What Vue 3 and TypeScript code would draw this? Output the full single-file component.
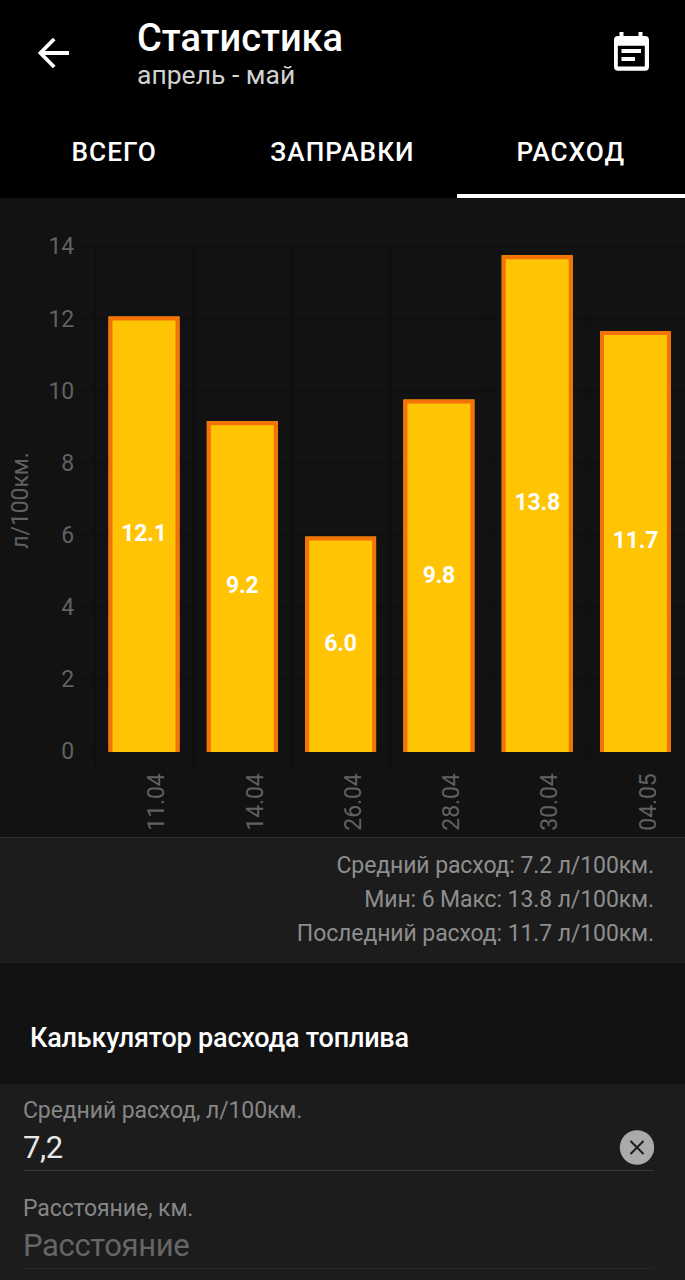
<script setup lang="ts">
import { ref } from 'vue'

interface Bar {
  date: string
  value: number
}

const tabs = ['ВСЕГО', 'ЗАПРАВКИ', 'РАСХОД']
const activeTab = ref(2)

const bars: Bar[] = [
  { date: '11.04', value: 12.1 },
  { date: '14.04', value: 9.2 },
  { date: '26.04', value: 6.0 },
  { date: '28.04', value: 9.8 },
  { date: '30.04', value: 13.8 },
  { date: '04.05', value: 11.7 },
]
const ticks = [14, 12, 10, 8, 6, 4, 2, 0]

const zeroY = 554
const unit = 36.07
const step = 98.3
const plotLeft = 95
const barWidth = 71

const yOf = (v: number): number => zeroY - v * unit
const topOf = (v: number): number => yOf(v) + 1
const xOf = (i: number): number => 108.5 + i * step
const outline = (i: number, v: number): string => {
  const l = xOf(i) + 2
  const r = xOf(i) + barWidth - 2
  const t = topOf(v) + 2
  return `M${l} ${zeroY}V${t}H${r}V${zeroY}`
}

const summary = [
  'Средний расход: 7.2 л/100км.',
  'Мин: 6 Макс: 13.8 л/100км.',
  'Последний расход: 11.7 л/100км.',
]

const average = ref('7,2')
const distance = ref('')
</script>

<template>
  <main class="screen">
    <header class="top">
      <div class="bar">
        <button class="icon-btn back" aria-label="Назад">
          <svg width="32" height="32" viewBox="0 0 32 32">
            <path d="M31 16H3M16.2 2L2.4 16L16.2 30" fill="none" stroke="#fff" stroke-width="3.8" />
          </svg>
        </button>
        <div class="heading">
          <h1>Статистика</h1>
          <p>апрель - май</p>
        </div>
        <button class="icon-btn calendar" aria-label="Период">
          <svg width="36" height="40" viewBox="0 0 36 40">
            <path
              fill="#fff"
              fill-rule="evenodd"
              d="M5.500 0h4v4h15V0h4v4h2.500a4 4 0 0 1 4 4v26.700a4 4 0 0 1-4 4H4a4 4 0 0 1-4-4V8a4 4 0 0 1 4-4H5.500zM3.800 13.700v20.800h27V13.700zM7.500 17h19.500v4H7.500zM7.500 25h13.500v4H7.500z"
            />
          </svg>
        </button>
      </div>
      <nav class="tabs">
        <button
          v-for="(tab, i) in tabs"
          :key="tab"
          class="tab"
          :class="{ active: i === activeTab }"
          @click="activeTab = i"
        >
          {{ tab }}
        </button>
      </nav>
    </header>

    <svg class="chart" width="685" height="639" viewBox="0 0 685 639">
      <g stroke="#0f0f0f" stroke-width="2">
        <line v-for="t in ticks" :key="t" x1="80" x2="685" :y1="yOf(t)" :y2="yOf(t)" />
        <line
          v-for="n in 6"
          :key="n"
          :x1="plotLeft + (n - 1) * step"
          :x2="plotLeft + (n - 1) * step"
          y1="49"
          y2="570"
        />
      </g>
      <text
        v-for="t in ticks"
        :key="'t' + t"
        class="axis"
        x="74.200"
        :y="yOf(t) + 7.4"
        text-anchor="end"
      >{{ t }}</text>
      <text class="axis unit" transform="translate(28 302.500) rotate(-90)" text-anchor="middle">л/100км.</text>
      <g v-for="(b, i) in bars" :key="b.date">
        <rect
          :x="xOf(i)"
          :y="topOf(b.value)"
          :width="barWidth"
          :height="zeroY - topOf(b.value)"
          fill="#ffc403"
        />
        <path :d="outline(i, b.value)" fill="none" stroke="#f47209" stroke-width="4" />
        <text
          class="value"
          :x="xOf(i) + barWidth / 2"
          :y="(yOf(b.value) + zeroY) / 2 + 7.300"
          text-anchor="middle"
        >{{ b.value.toFixed(1) }}</text>
        <text
          class="axis date"
          :transform="`translate(${xOf(i) + 55.7} 604) rotate(-90)`"
          text-anchor="middle"
        >{{ b.date }}</text>
      </g>
    </svg>

    <section class="summary">
      <p v-for="line in summary" :key="line">{{ line }}</p>
    </section>

    <h2>Калькулятор расхода топлива</h2>

    <section class="form">
      <label class="field">
        <span class="caption">Средний расход, л/100км.</span>
        <span class="row">
          <input v-model="average" type="text" />
          <button class="clear" aria-label="Очистить" @click="average = ''">
            <svg width="35" height="35" viewBox="0 0 35 35">
              <circle cx="18" cy="17.500" r="17.200" fill="#aaa" />
              <path d="M11.500 11L24.500 24M24.500 11L11.500 24" stroke="#1c1c1c" stroke-width="2" />
            </svg>
          </button>
        </span>
      </label>
      <label class="field dim">
        <span class="caption">Расстояние, км.</span>
        <span class="row">
          <input v-model="distance" type="text" placeholder="Расстояние" />
        </span>
      </label>
    </section>
  </main>
</template>

<style>
html,
body {
  background: #121212;
  overflow: hidden;
}
</style>

<style scoped>
.screen {
  width: 685px;
  height: 1280px;
  overflow: hidden;
  background: #121212;
  color: #fff;
  font-family: Roboto, 'Noto Sans', sans-serif;
}
h1,
h2,
p {
  margin: 0;
}
button {
  border: 0;
  padding: 0;
  background: none;
  color: inherit;
  font-family: inherit;
}
svg {
  display: block;
}
.top {
  height: 198px;
  background: #000;
}
.bar {
  display: flex;
  height: 106px;
  box-sizing: border-box;
  padding: 17px 35px 0 38px;
}
.back {
  align-self: flex-start;
  margin-top: 20px;
}
.heading {
  flex: 1;
  margin-left: 67px;
}
h1 {
  font-size: 38px;
  font-weight: 500;
  line-height: 42px;
}
.heading p {
  font-size: 26.5px;
  line-height: 32px;
  color: #d2d2d2;
}
.calendar {
  align-self: flex-start;
  margin-top: 15px;
}
.tabs {
  display: grid;
  grid-template-columns: repeat(3, 1fr);
  height: 92px;
}
.tab {
  border-top: 4px solid transparent;
  border-bottom: 4px solid transparent;
  font-size: 26.2px;
  font-weight: 500;
  letter-spacing: 1.05px;
}
.tab.active {
  border-bottom-color: #fff;
}
.axis {
  fill: #616161;
  font-size: 23px;
  letter-spacing: -0.1px;
}
.value {
  fill: #fff;
  font-size: 23px;
  font-weight: 700;
  letter-spacing: -0.2px;
}
.summary {
  height: 126px;
  box-sizing: border-box;
  padding: 11px 31px 0;
  border-top: 1px solid #303030;
  border-bottom: 1px solid #262626;
  background: #1c1c1c;
  color: #8e8e8e;
  font-size: 23px;
  letter-spacing: -0.1px;
  line-height: 34.2px;
  text-align: right;
}
h2 {
  height: 121px;
  box-sizing: border-box;
  padding: 58px 30px 0;
  font-size: 27px;
  font-weight: 500;
  letter-spacing: -0.2px;
  line-height: 34px;
}
.form {
  display: flex;
  flex-direction: column;
  gap: 22px;
  height: 196px;
  box-sizing: border-box;
  padding: 11px 31px 0 23px;
  background: #1c1c1c;
}
.field {
  display: block;
}
.caption {
  display: block;
  height: 30px;
  font-size: 23px;
  letter-spacing: -0.1px;
  line-height: 32px;
  color: #868686;
}
.row {
  display: flex;
  align-items: center;
  height: 45px;
  border-bottom: 1px solid #3a3a3a;
}
.dim .row {
  border-bottom-color: #272727;
}
input {
  flex: 1;
  min-width: 0;
  height: 45px;
  box-sizing: border-box;
  padding: 0;
  border: 0;
  outline: 0;
  background: transparent;
  color: #e8e8e8;
  font-family: inherit;
  font-size: 31px;
  letter-spacing: -0.35px;
}
input::placeholder {
  color: #666;
  opacity: 1;
}
</style>
